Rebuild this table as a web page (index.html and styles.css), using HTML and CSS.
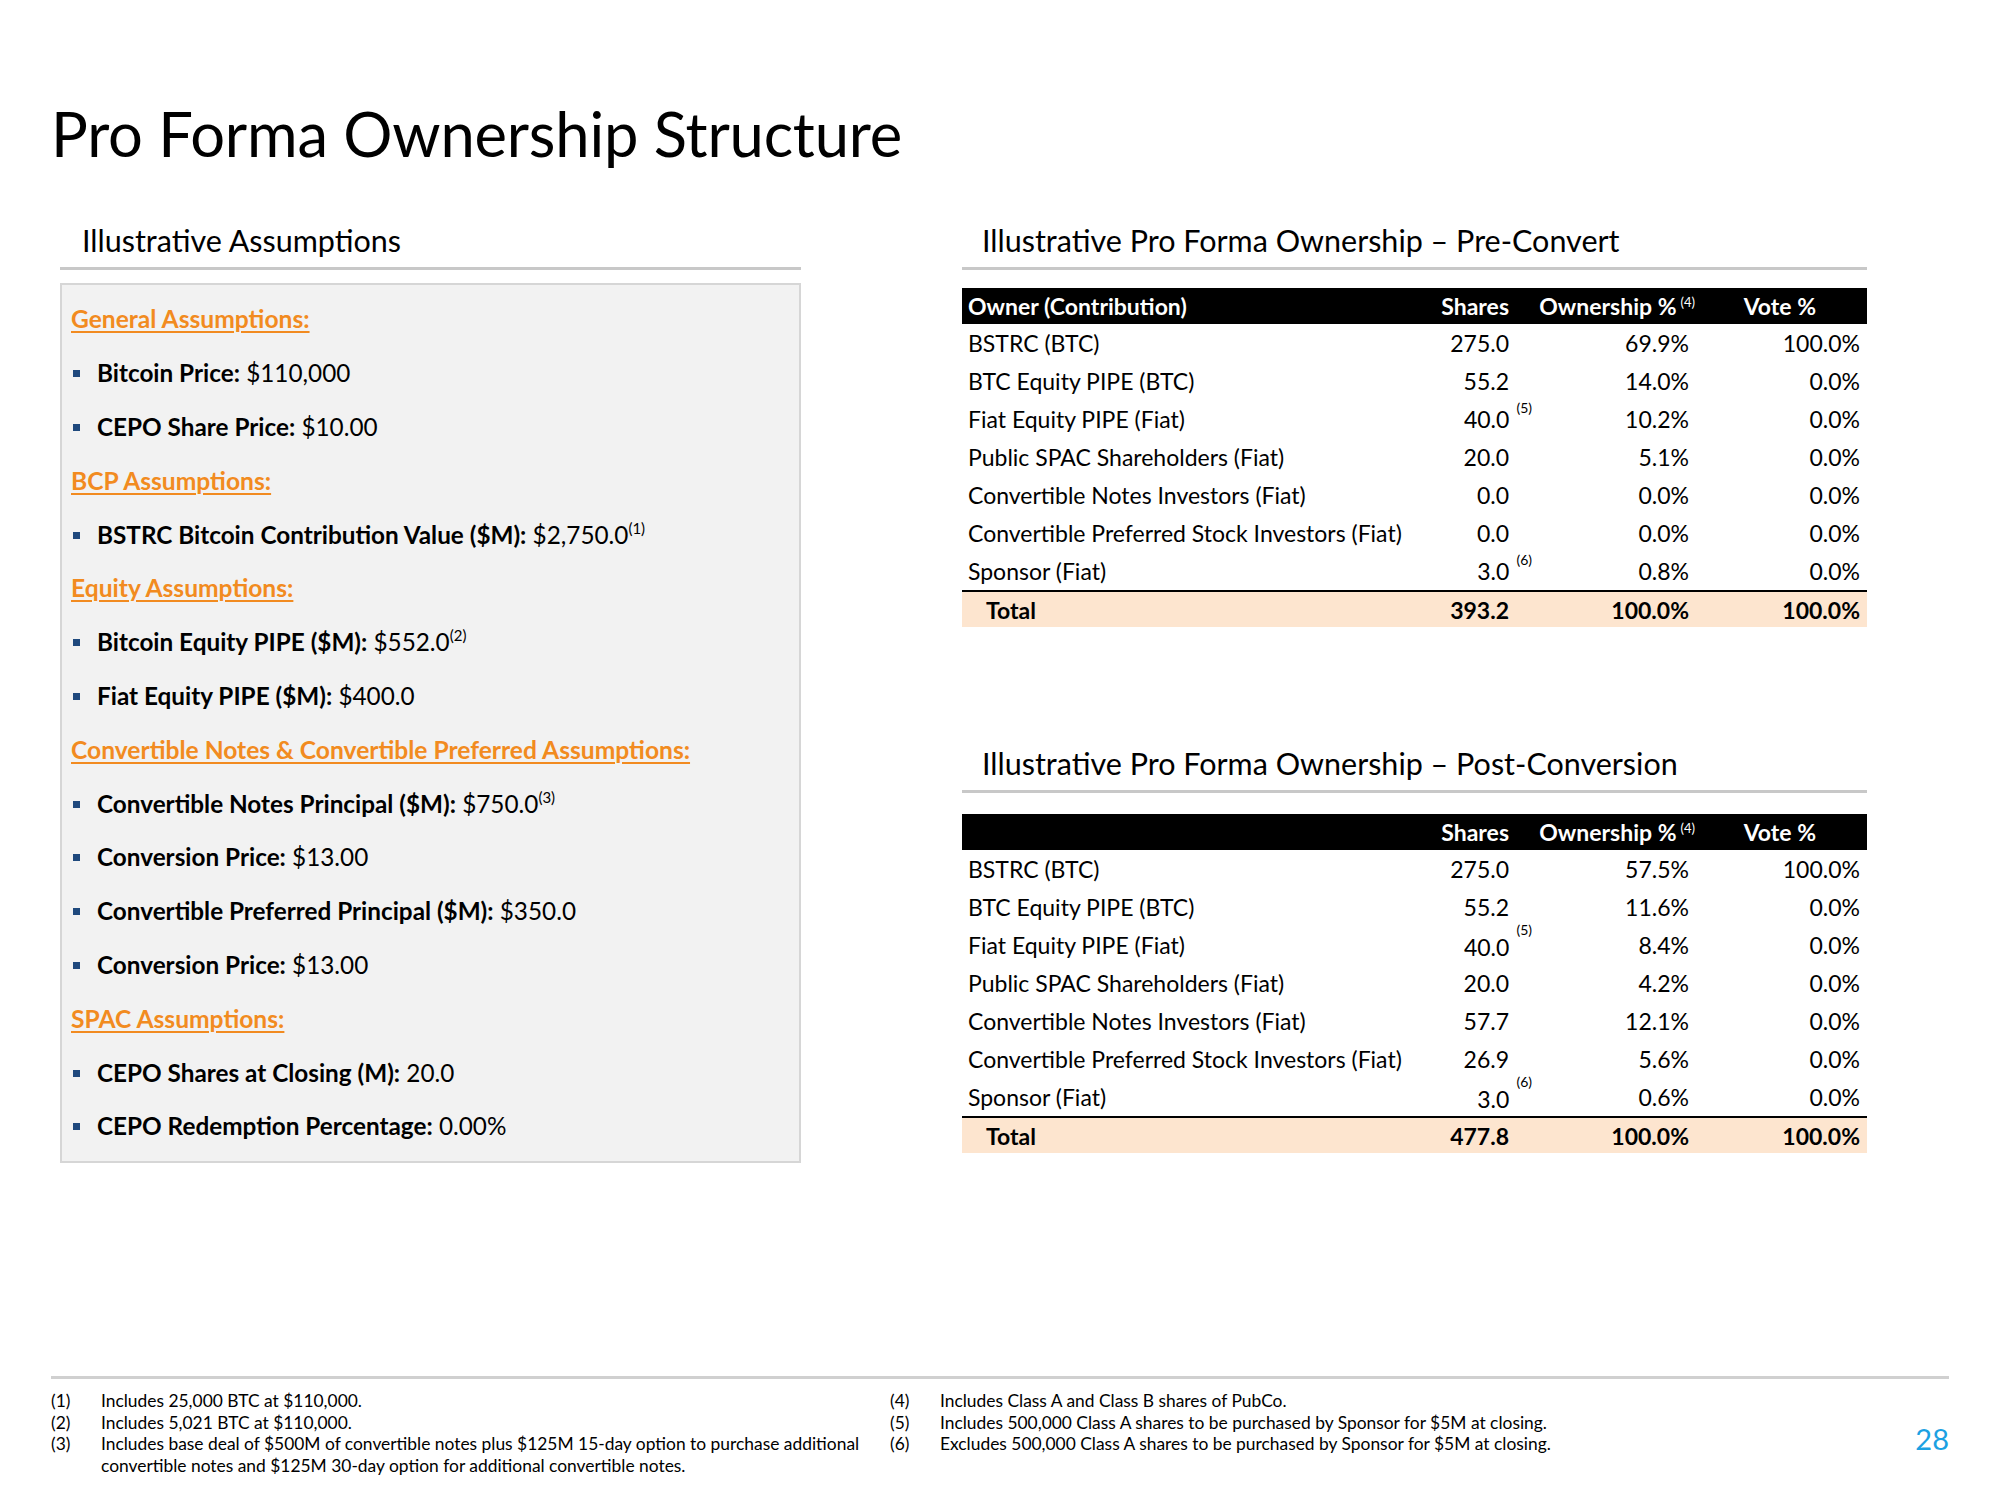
FILE: index.html
```html
<!DOCTYPE html>
<html lang="en">
<head>
<meta charset="utf-8">
<title>Pro Forma Ownership Structure</title>
<link rel="stylesheet" href="styles.css">
</head>
<body>
<div class="slide">
  <h1 class="title">Pro Forma Ownership Structure</h1>
  <div class="content">
    <section class="left">
      <h2 class="sec-head">Illustrative Assumptions</h2>
      <div class="box">
        <div class="line cat"><span>General Assumptions:</span></div>
        <div class="line item"><span><b>Bitcoin Price:</b> $110,000</span></div>
        <div class="line item"><span><b>CEPO Share Price:</b> $10.00</span></div>
        <div class="line cat"><span>BCP Assumptions:</span></div>
        <div class="line item"><span><b>BSTRC Bitcoin Contribution Value ($M):</b> $2,750.0<span class="sup">(1)</span></span></div>
        <div class="line cat"><span>Equity Assumptions:</span></div>
        <div class="line item"><span><b>Bitcoin Equity PIPE ($M):</b> $552.0<span class="sup">(2)</span></span></div>
        <div class="line item"><span><b>Fiat Equity PIPE ($M):</b> $400.0</span></div>
        <div class="line cat"><span>Convertible Notes &amp; Convertible Preferred Assumptions:</span></div>
        <div class="line item"><span><b>Convertible Notes Principal ($M):</b> $750.0<span class="sup">(3)</span></span></div>
        <div class="line item"><span><b>Conversion Price:</b> $13.00</span></div>
        <div class="line item"><span><b>Convertible Preferred Principal ($M):</b> $350.0</span></div>
        <div class="line item"><span><b>Conversion Price:</b> $13.00</span></div>
        <div class="line cat"><span>SPAC Assumptions:</span></div>
        <div class="line item"><span><b>CEPO Shares at Closing (M):</b> 20.0</span></div>
        <div class="line item"><span><b>CEPO Redemption Percentage:</b> 0.00%</span></div>
      </div>
    </section>
    <section class="right">
      <h2 class="sec-head">Illustrative Pro Forma Ownership – Pre-Convert</h2>
      <div class="tbl t1">
        <div class="row head"><span>Owner (Contribution)</span><span>Shares</span><span>Ownership %<span class="hsup">(4)</span></span><span>Vote %</span></div>
        <div class="row"><span>BSTRC (BTC)</span><span>275.0</span><span>69.9%</span><span>100.0%</span></div>
        <div class="row"><span>BTC Equity PIPE (BTC)</span><span>55.2</span><span>14.0%</span><span>0.0%</span></div>
        <div class="row"><span>Fiat Equity PIPE (Fiat)</span><span>40.0<span class="fn">(5)</span></span><span>10.2%</span><span>0.0%</span></div>
        <div class="row"><span>Public SPAC Shareholders (Fiat)</span><span>20.0</span><span>5.1%</span><span>0.0%</span></div>
        <div class="row"><span>Convertible Notes Investors (Fiat)</span><span>0.0</span><span>0.0%</span><span>0.0%</span></div>
        <div class="row"><span>Convertible Preferred Stock Investors (Fiat)</span><span>0.0</span><span>0.0%</span><span>0.0%</span></div>
        <div class="row"><span>Sponsor (Fiat)</span><span>3.0<span class="fn">(6)</span></span><span>0.8%</span><span>0.0%</span></div>
        <div class="row total"><span>Total</span><span>393.2</span><span>100.0%</span><span>100.0%</span></div>
      </div>
      <h2 class="sec-head second">Illustrative Pro Forma Ownership – Post-Conversion</h2>
      <div class="tbl t2">
        <div class="row head"><span></span><span>Shares</span><span>Ownership %<span class="hsup">(4)</span></span><span>Vote %</span></div>
        <div class="row"><span>BSTRC (BTC)</span><span>275.0</span><span>57.5%</span><span>100.0%</span></div>
        <div class="row"><span>BTC Equity PIPE (BTC)</span><span>55.2</span><span>11.6%</span><span>0.0%</span></div>
        <div class="row"><span>Fiat Equity PIPE (Fiat)</span><span>40.0<span class="fn">(5)</span></span><span>8.4%</span><span>0.0%</span></div>
        <div class="row"><span>Public SPAC Shareholders (Fiat)</span><span>20.0</span><span>4.2%</span><span>0.0%</span></div>
        <div class="row"><span>Convertible Notes Investors (Fiat)</span><span>57.7</span><span>12.1%</span><span>0.0%</span></div>
        <div class="row"><span>Convertible Preferred Stock Investors (Fiat)</span><span>26.9</span><span>5.6%</span><span>0.0%</span></div>
        <div class="row"><span>Sponsor (Fiat)</span><span>3.0<span class="fn">(6)</span></span><span>0.6%</span><span>0.0%</span></div>
        <div class="row total"><span>Total</span><span>477.8</span><span>100.0%</span><span>100.0%</span></div>
      </div>
    </section>
  </div>
  <footer class="foot">
    <div class="notes">
      <div class="note"><span class="n">(1)</span><span class="t">Includes 25,000 BTC at $110,000.</span></div>
      <div class="note"><span class="n">(2)</span><span class="t">Includes 5,021 BTC at $110,000.</span></div>
      <div class="note"><span class="n">(3)</span><span class="t">Includes base deal of $500M of convertible notes plus $125M 15-day option to purchase additional convertible notes and $125M 30-day option for additional convertible notes.</span></div>
    </div>
    <div class="notes">
      <div class="note"><span class="n">(4)</span><span class="t">Includes Class A and Class B shares of PubCo.</span></div>
      <div class="note"><span class="n">(5)</span><span class="t">Includes 500,000 Class A shares to be purchased by Sponsor for $5M at closing.</span></div>
      <div class="note"><span class="n">(6)</span><span class="t">Excludes 500,000 Class A shares to be purchased by Sponsor for $5M at closing.</span></div>
    </div>
    <div class="page">28</div>
  </footer>
</div>
</body>
</html>
```

FILE: styles.css
```css
* { box-sizing: border-box; margin: 0; padding: 0; }

body {
  margin: 0;
  background: #ffffff;
  color: #000000;
  font-family: Lato, "Open Sans", sans-serif;
}

.slide {
  width: 2000px;
  height: 1500px;
  padding: 0 51px;
  display: flex;
  flex-direction: column;
}

.title {
  font-weight: 400;
  font-size: 61.5px;
  line-height: 70px;
  margin-top: 98px;
  letter-spacing: -0.2px;
}

.content {
  display: grid;
  grid-template-columns: 741px 905px;
  column-gap: 161px;
  margin-left: 9px;
  margin-top: 52px;
}

.sec-head {
  font-weight: 400;
  font-size: 30.5px;
  line-height: 40px;
  padding-bottom: 7px;
  border-bottom: 3px solid #c8c8c8;
  white-space: nowrap;
}

.left .sec-head { padding-left: 22px; }
.right .sec-head { padding-left: 20px; }
.right .sec-head.second { margin-top: 116px; }

/* Assumptions box */
.box {
  margin-top: 13px;
  height: 880px;
  background: #f2f2f2;
  border: 2px solid #d6d6d6;
  padding: 7px 9px 8px;
}

.line {
  height: 53.8px;
  display: flex;
  align-items: center;
  font-size: 24.3px;
  white-space: nowrap;
}

.cat {
  color: #f28b20;
  font-weight: 700;
  font-size: 24.6px;
}

.cat span {
  text-decoration: underline;
  text-decoration-thickness: 2px;
  text-underline-offset: 3px;
}

.item::before {
  content: "";
  flex: none;
  width: 7px;
  height: 7px;
  background: #1f497d;
  margin: 2px 17px 0 2px;
}

.item b { font-weight: 700; }

.sup {
  font-size: 15px;
  line-height: 0;
  vertical-align: 10px;
}

/* Ownership tables */
.tbl { margin-top: 18px; font-size: 23px; }
.tbl.t2 { margin-top: 21px; }

.row {
  display: grid;
  grid-template-columns: 456px 97px 180px 172px;
  height: 38px;
  align-items: center;
}

.row > span {
  padding: 0 6px;
  text-align: right;
  white-space: nowrap;
}

.row > span:first-child { text-align: left; }
.row > span:last-child { padding-right: 7px; }

.head {
  height: 36px;
  background: #000000;
  color: #ffffff;
  font-weight: 700;
}

.head > span:nth-child(3) { padding-right: 0; }
.head > span:last-child { padding-right: 51px; }

.hsup {
  font-size: 13px;
  font-weight: 400;
  line-height: 0;
  vertical-align: 8px;
  margin-left: 4px;
}

.total {
  height: 37px;
  background: #fde5cf;
  border-top: 2px solid #000000;
  font-weight: 700;
}

.total > span:first-child { padding-left: 24px; }

.fn {
  font-size: 14px;
  line-height: 0;
  margin-left: 7px;
  margin-right: -23px;
  vertical-align: 15px;
}

.t2 .fn { vertical-align: 21px; }

/* Footer */
.foot {
  margin-top: auto;
  border-top: 3px solid #d0d0d0;
  padding: 11px 0 24px;
  display: grid;
  grid-template-columns: 839px 1fr auto;
  font-size: 17.4px;
  line-height: 21.5px;
}

.note { display: flex; }
.note .n { flex: none; width: 50px; }

.page {
  align-self: center;
  padding-top: 12px;
  color: #1ba1e2;
  font-size: 29px;
  line-height: 32px;
}
```
